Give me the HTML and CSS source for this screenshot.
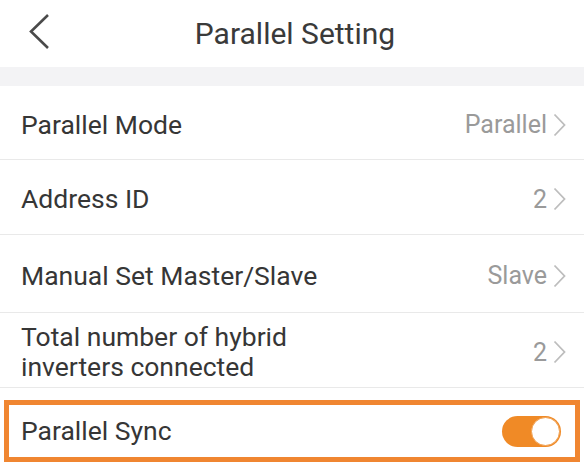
FILE: index.html
```html
<!DOCTYPE html>
<html lang="en">
<head>
    <meta charset="UTF-8">
    <meta name="viewport" content="width=device-width, initial-scale=1.0">
    <title>Parallel Setting</title>
    <link rel="stylesheet" href="styles.css">
</head>
<body>
    <div class="header">
        <svg class="back" width="24" height="40" viewBox="0 0 24 40">
            <polyline points="20,3 3,19.5 20,36" fill="none" stroke="#4a4a4a" stroke-width="2.6"/>
        </svg>
        <h1>Parallel Setting</h1>
    </div>
    <div class="band"></div>

    <div class="list">
        <div class="row r1">
            <span class="label">Parallel Mode</span>
            <span class="value">Parallel <svg class="chev" width="13" height="24" viewBox="0 0 13 24"><polyline points="1.5,1.5 11.5,12 1.5,22.5" fill="none" stroke="#bdbdbd" stroke-width="1.8"/></svg></span>
        </div>
        <div class="row r2">
            <span class="label">Address ID</span>
            <span class="value">2 <svg class="chev" width="13" height="24" viewBox="0 0 13 24"><polyline points="1.5,1.5 11.5,12 1.5,22.5" fill="none" stroke="#bdbdbd" stroke-width="1.8"/></svg></span>
        </div>
        <div class="row r3">
            <span class="label">Manual Set Master/Slave</span>
            <span class="value">Slave <svg class="chev" width="13" height="24" viewBox="0 0 13 24"><polyline points="1.5,1.5 11.5,12 1.5,22.5" fill="none" stroke="#bdbdbd" stroke-width="1.8"/></svg></span>
        </div>
        <div class="row r4">
            <span class="label">Total number of hybrid<br>inverters connected</span>
            <span class="value">2 <svg class="chev" width="13" height="24" viewBox="0 0 13 24"><polyline points="1.5,1.5 11.5,12 1.5,22.5" fill="none" stroke="#bdbdbd" stroke-width="1.8"/></svg></span>
        </div>
        <div class="row sync">
            <span class="label">Parallel Sync</span>
            <span class="toggle"><span class="knob"></span></span>
        </div>
    </div>
</body>
</html>
```

FILE: styles.css
```css
body {
    margin: 0;
    padding: 0;
    width: 584px;
    height: 464px;
    overflow: hidden;
    background: #fff;
    font-family: Roboto, "Liberation Sans", sans-serif;
    color: #333;
}

.header {
    height: 67px;
    display: flex;
    align-items: center;
    justify-content: center;
    position: relative;
}

.header h1 {
    margin: 0 0 0 6px;
    font-size: 30px;
    font-weight: 400;
    color: #3a3a3a;
}

.back {
    position: absolute;
    left: 28px;
    top: 12px;
}

.band {
    height: 19px;
    background: #f3f3f5;
}

.row {
    display: flex;
    align-items: center;
    justify-content: space-between;
    padding: 4px 18px 0 21px;
    border-bottom: 1px solid #e9e9e9;
    box-sizing: border-box;
}

.r1 { height: 74px; }
.r2 { height: 75px; }
.r3 { height: 78px; }
.r4 { height: 75px; }

.label {
    font-size: 26.5px;
    line-height: 30px;
    color: #363636;
}

.value {
    font-size: 25px;
    color: #9a9a9a;
    display: flex;
    align-items: center;
    gap: 6px;
}

.sync {
    margin: 12px 4px 0 4px;
    height: 62px;
    border: 5px solid #f08631;
    padding: 0 14px 0 12px;
}

.toggle {
    width: 59px;
    height: 31px;
    border-radius: 16px;
    background: #f08a26;
    position: relative;
}

.knob {
    position: absolute;
    right: 1px;
    top: 1px;
    width: 27px;
    height: 27px;
    border-radius: 50%;
    background: #fff;
    border: 1px solid #f0a050;
}
```
